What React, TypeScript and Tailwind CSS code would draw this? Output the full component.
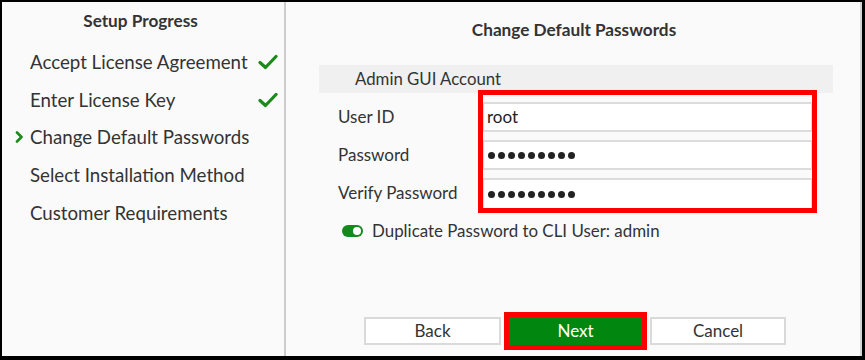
import React from "react";

const Check = () => (
  <svg width="20" height="16" viewBox="0 0 20 16" className="shrink-0">
    <path d="M2 8.5 L7.5 13.5 L18 2.5" fill="none" stroke="#1b8a1b" strokeWidth="3.2" strokeLinecap="round" strokeLinejoin="round" />
  </svg>
);

const Chevron = () => (
  <svg width="9" height="12" viewBox="0 0 9 12">
    <path d="M2 1.5 L6.5 6 L2 10.5" fill="none" stroke="#1b8a1b" strokeWidth="2.6" strokeLinecap="round" strokeLinejoin="round" />
  </svg>
);

const steps = [
  { label: "Accept License Agreement", done: true },
  { label: "Enter License Key", done: true },
  { label: "Change Default Passwords", current: true },
  { label: "Select Installation Method" },
  { label: "Customer Requirements" },
];

const Dots = () => (
  <span className="flex items-center gap-[3px]">
    {Array.from({ length: 9 }).map((_, i) => (
      <span key={i} className="block w-[7px] h-[7px] rounded-full bg-[#222]" />
    ))}
  </span>
);

export default function App() {
  return (
    <div
      className="w-[865px] h-[360px] flex bg-[#fafafa] border-black border-l-2 border-t-2 border-r-[3px] border-b-4 text-[#333]"
      style={{ fontFamily: "Lato, 'Open Sans', sans-serif" }}
    >
      {/* Left panel */}
      <div className="w-[284px] shrink-0 border-r-2 border-[#cccccc] flex flex-col">
        <div className="pt-[7px] h-[31px] text-center text-[17.2px] leading-[24px] font-bold text-[#333] pr-[5px]">
          Setup Progress
        </div>
        <div className="mt-[10px] flex flex-col">
          {steps.map((s) => (
            <div key={s.label} className="h-[37.75px] flex items-center relative">
              <div className="w-[28px] flex justify-end pr-[6px]">{s.current ? <Chevron /> : null}</div>
              <span className="text-[18.7px] leading-[24px] text-[#333]">{s.label}</span>
              {s.done ? (
                <span className="absolute left-[256px] top-[11px]">
                  <Check />
                </span>
              ) : null}
            </div>
          ))}
        </div>
      </div>

      {/* Right panel */}
      <div className="flex-1 flex flex-col border-r-2 border-[#d4d4d4]">
        <div className="pt-[16px] text-center text-[17.2px] leading-[24px] font-bold text-[#333] pl-[2px]">
          Change Default Passwords
        </div>
        <div className="mt-[23px] ml-[33px] mr-[27px] h-[28px] bg-[#f0f0f0] flex items-center pl-[36px] text-[16.8px] text-[#333]">
          Admin GUI Account
        </div>
        <div className="-mt-[3px] flex">
          <div className="ml-[52px] w-[140px] pt-[12px] flex flex-col gap-[8px] text-[17px]">
            <div className="h-[30px] flex items-center">User ID</div>
            <div className="h-[30px] flex items-center">Password</div>
            <div className="h-[30px] flex items-center">Verify Password</div>
          </div>
          <div className="w-[339px] border-[5px] border-[#ff0000] pt-[7px] flex flex-col gap-[8px]">
            <div className="h-[30px] bg-white border-y-2 border-x border-[#dcdcdc] flex items-center pl-[3px] text-[17px] text-[#222]">
              root
            </div>
            <div className="h-[30px] bg-white border-y-2 border-x border-[#dcdcdc] flex items-center pl-[4px]">
              <Dots />
            </div>
            <div className="h-[30px] bg-white border-t-2 border-x border-[#dcdcdc] flex items-center pl-[4px]">
              <Dots />
            </div>
          </div>
        </div>
        <div className="mt-[8px] ml-[56px] flex items-center h-[20px]">
          <span className="w-[21px] h-[12px] rounded-full bg-[#128a1c] flex items-center justify-end pr-[2px]">
            <span className="block w-[8px] h-[8px] rounded-full bg-white" />
          </span>
          <span className="ml-[9px] text-[16.9px] text-[#333]">Duplicate Password to CLI User: admin</span>
        </div>
        <div className="mt-auto pb-[11px] flex justify-center gap-[8px] pl-[4px]">
          <button className="w-[137px] h-[28px] bg-white border-2 border-[#dadada] text-[17px] text-[#333] flex items-center justify-center">
            Back
          </button>
          <button className="w-[133px] h-[28px] bg-[#01870f] text-white text-[17px] flex items-center justify-center outline-[5px] outline-solid outline-[#ff0000]">
            Next
          </button>
          <button className="w-[136px] h-[28px] bg-white border-2 border-[#dadada] text-[17px] text-[#333] flex items-center justify-center">
            Cancel
          </button>
        </div>
      </div>
    </div>
  );
}
